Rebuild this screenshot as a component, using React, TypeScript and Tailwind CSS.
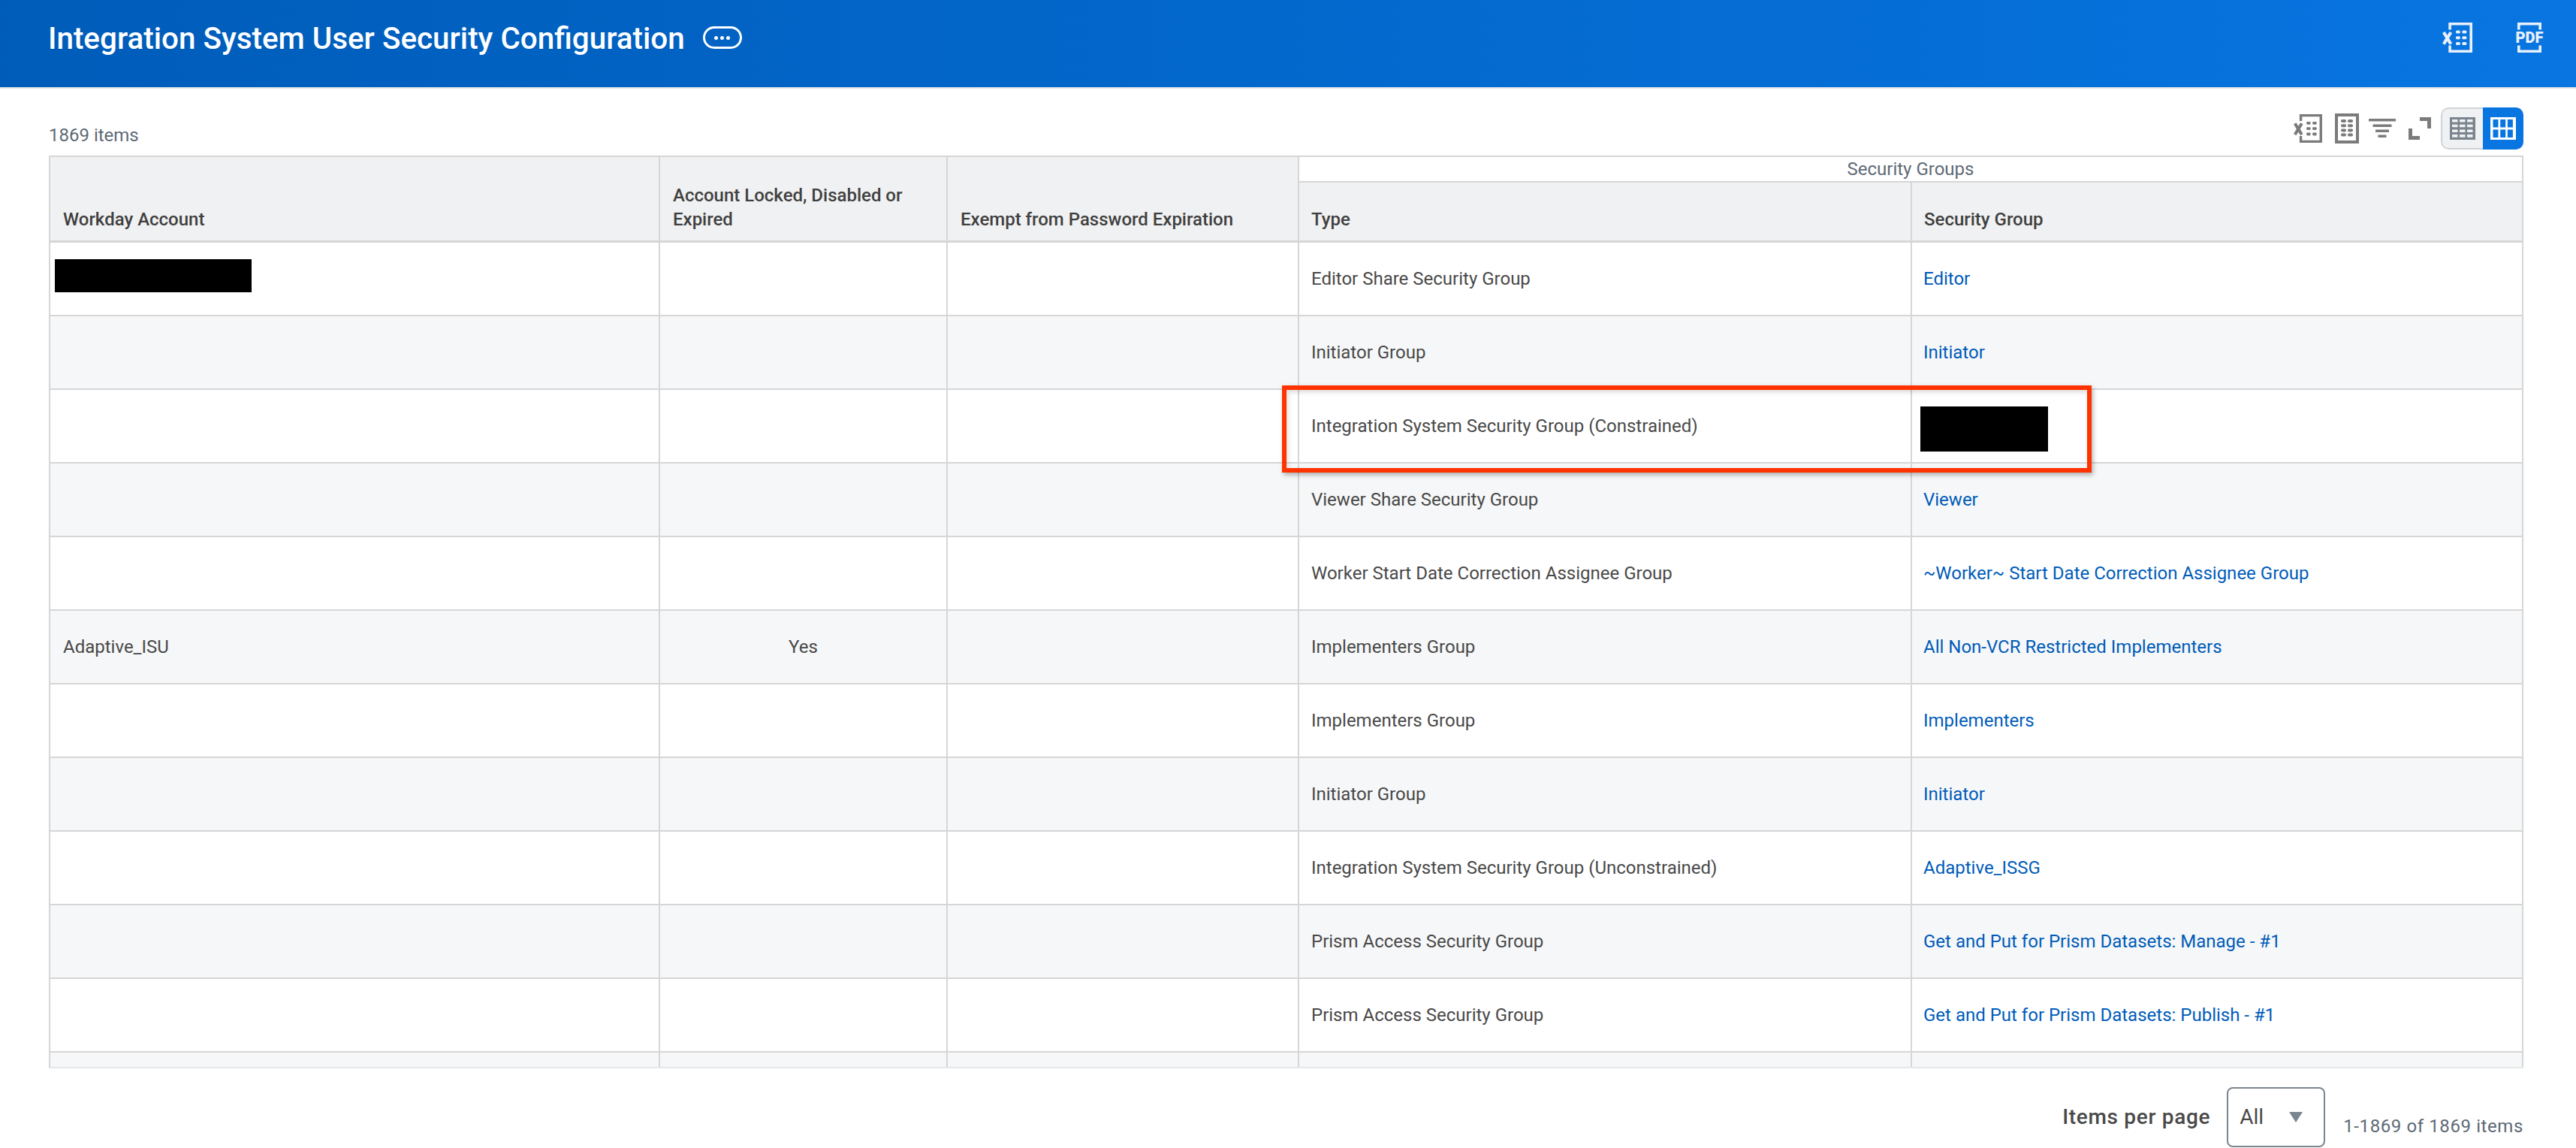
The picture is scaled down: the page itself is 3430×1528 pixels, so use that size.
const rows: [string, string, string, string][] = [
  ["", "", "Editor Share Security Group", "Editor"],
  ["", "", "Initiator Group", "Initiator"],
  ["", "", "Integration System Security Group (Constrained)", ""],
  ["", "", "Viewer Share Security Group", "Viewer"],
  ["", "", "Worker Start Date Correction Assignee Group", "~Worker~ Start Date Correction Assignee Group"],
  ["Adaptive_ISU", "Yes", "Implementers Group", "All Non-VCR Restricted Implementers"],
  ["", "", "Implementers Group", "Implementers"],
  ["", "", "Initiator Group", "Initiator"],
  ["", "", "Integration System Security Group (Unconstrained)", "Adaptive_ISSG"],
  ["", "", "Prism Access Security Group", "Get and Put for Prism Datasets: Manage - #1"],
  ["", "", "Prism Access Security Group", "Get and Put for Prism Datasets: Publish - #1"],
  ["", "", "", ""],
];

const GridLight = ({ className }: { className: string }) => (
  <svg viewBox="0 0 34 30" className={className}>
    <rect width="34" height="30" fill="currentColor" />
    {[0, 1, 2, 3].map((r) =>
      [0, 1, 2].map((c) => (
        <rect key={`${r}-${c}`} x={3 + c * 10} y={3 + r * 6.7} width="7.5" height="3.6" rx="0.5" fill="#f0f1f2" />
      ))
    )}
  </svg>
);

const GridBold = ({ className }: { className: string }) => (
  <svg viewBox="0 0 34 30" className={className}>
    <rect width="34" height="30" fill="currentColor" />
    {[0, 1].map((r) =>
      [0, 1, 2].map((c) => (
        <rect key={`${r}-${c}`} x={3.5 + c * 9.7} y={3 + r * 13.5} width="7" height="10.5" fill="#0875e1" />
      ))
    )}
  </svg>
);

const XlsIcon = ({ className }: { className: string }) => (
  <svg viewBox="0 0 40 40" fill="currentColor" className={className}>
    <path d="M8.300 0H40v40H8.300v-9.500h3.600v6H36.400V3.500H11.900v6H8.300z" />
    <path d="M1.800 13l9.600 15.600M11.400 13L1.800 28.600" stroke="currentColor" strokeWidth="4.200" fill="none" />
    {[10.500, 18.200, 25.900].map((y) => (
      <g key={y}>
        <rect x="18" y={y} width="5.800" height="4" rx="1.500" />
        <rect x="26.400" y={y} width="6" height="4" rx="1.500" />
      </g>
    ))}
  </svg>
);

export default function App() {
  return (
    <div className="relative h-[1528px] w-[3430px] overflow-hidden bg-white font-['Roboto',sans-serif]">
      <header className="flex h-[118px] items-start justify-between border-b-2 border-[#e0e3e6] bg-gradient-to-r from-[#005cb9] to-[#0875e1] pl-[64px] pr-[44px]">
        <div className="flex h-[100px] items-center gap-[24px]">
          <h1 className="pt-[4px] text-[40.4px] font-medium leading-[48px] text-white">Integration System User Security Configuration</h1>
          <span className="flex h-[30px] w-[52px] items-center justify-center gap-[3px] rounded-[15px] border-[3px] border-white">
            <i className="h-[5px] w-[5px] rounded-full bg-white" />
            <i className="h-[5px] w-[5px] rounded-full bg-white" />
            <i className="h-[5px] w-[5px] rounded-full bg-white" />
          </span>
        </div>
        <div className="flex items-start gap-[58px] pt-[30px] text-[#e8f0fb]">
          <XlsIcon className="h-[40px] w-[40px]" />
          <span className="relative block h-[40px] w-[36px]">
            <svg viewBox="0 0 32 40" fill="currentColor" className="absolute left-[2px] top-0 h-[40px] w-[32px]">
              <path d="M0 0h32v9.500h-3.600V3.500H3.600v6H0zM0 30.500h3.600v6h24.800v-6H32V40H0z" />
            </svg>
            <span className="absolute inset-0 flex items-center justify-center text-[20px] font-black leading-[40px]">PDF</span>
          </span>
        </div>
      </header>

      <div className="ml-[65px] mr-[70px] flex h-[89px] items-center justify-between pt-[34px]">
        <span className="text-[24px] leading-[32px] text-[#5e6a75]">1869 items</span>
        <div className="relative top-[-9px] flex items-center gap-[13px] text-[#7b7b7b]">
          <XlsIcon className="h-[38px] w-[38px]" />
          <svg viewBox="0 0 32 40" fill="currentColor" className="ml-[4px] h-[40px] w-[32px]">
            <path fillRule="evenodd" d="M0 0h32v40H0zM4 4v32h24V4z" />
            {[0, 1, 2, 3].map((r) => (
              <g key={r}>
                <rect x="8" y={8 + r * 6.2} width="7" height="4" rx="1.8" />
                <rect x="17" y={8 + r * 6.2} width="7" height="4" rx="1.8" />
              </g>
            ))}
          </svg>
          <svg viewBox="0 0 36 25" fill="currentColor" className="h-[25px] w-[36px]">
            <rect width="36" height="3.500" y="0" rx="0.5" />
            <rect x="5.500" width="25" height="3.500" y="7.500" rx="0.5" />
            <rect x="9" width="18" height="3.500" y="14.500" rx="0.5" />
            <rect x="12.500" width="11" height="3.500" y="21.500" rx="0.5" />
          </svg>
          <svg viewBox="0 0 30 30" fill="currentColor" className="ml-[4px] h-[30px] w-[30px]">
            <path d="M15 0h15v15h-5V5H15zM0 15h5v10h10v5H0z" />
          </svg>
          <div className="flex h-[56px] w-[110px] overflow-hidden rounded-[10px]">
            <span className="flex w-[56px] items-center justify-center rounded-l-[10px] border-2 border-r-0 border-[#ced3d9] bg-[#f0f1f2] text-[#7b858f]">
              <GridLight className="h-[30px] w-[34px]" />
            </span>
            <span className="flex w-[54px] items-center justify-center bg-[#0875e1] text-white">
              <GridBold className="h-[30px] w-[34px]" />
            </span>
          </div>
        </div>
      </div>

      <div className="ml-[65px] h-[1215px] w-[3295px] overflow-hidden border-b-2 border-l-2 border-[#d6d6d6] border-b-[#e4e8e9]">
        <table className="w-full table-fixed border-separate border-spacing-0 text-[24px] leading-[32px] text-[#494949]">
          <colgroup>
            <col className="w-[812px]" />
            <col className="w-[383px]" />
            <col className="w-[468px]" />
            <col className="w-[816px]" />
            <col className="w-[814px]" />
          </colgroup>
          <thead className="font-medium text-[#404040]">
            <tr className="h-[36px]">
              {["Workday Account", "Account Locked, Disabled or Expired", "Exempt from Password Expiration"].map((h) => (
                <th key={h} rowSpan={2} className="border-r-2 border-t-2 border-b-[3px] border-[#d6d6d6] bg-[#f0f1f2] px-[17px] pb-[12px] pt-0 text-left align-bottom font-medium">
                  {h}
                </th>
              ))}
              <th colSpan={2} className="border-r-2 border-t-2 border-b-2 border-[#d6d6d6] bg-white p-0 text-center text-[24px] font-normal leading-[30px] text-[#5e6a75]">
                Security Groups
              </th>
            </tr>
            <tr className="h-[80px]">
              <th className="border-r-2 border-b-[3px] border-[#d6d6d6] bg-[#f0f1f2] px-[16px] pb-[12px] text-left align-bottom font-medium">Type</th>
              <th className="border-r-2 border-b-[3px] border-[#d6d6d6] bg-[#f0f1f2] px-[16px] pb-[12px] text-left align-bottom font-medium">Security Group</th>
            </tr>
          </thead>
          <tbody>
            {rows.map((r, i) => (
              <tr key={i} className={`h-[98px] ${i % 2 ? "bg-[#f6f7f8]" : "bg-white"}`}>
                <td className="border-r-2 border-b-2 border-[#d6d6d6] px-[17px]">{r[0]}</td>
                <td className="border-r-2 border-b-2 border-[#d6d6d6] px-[17px] text-center">{r[1]}</td>
                <td className="border-r-2 border-b-2 border-[#d6d6d6] px-[17px]" />
                <td className="border-r-2 border-b-2 border-[#d6d6d6] px-[16px]">{r[2]}</td>
                <td className="border-r-2 border-b-2 border-[#d6d6d6] px-[15px] text-[#005cb9]">{r[3]}</td>
              </tr>
            ))}
          </tbody>
        </table>
      </div>

      <footer className="flex h-[105px] items-center justify-end pr-[70px] pt-[25px]">
        <span className="mr-[22px] text-[28px] font-medium leading-[32px] tracking-[0.7px] text-[#494949]">Items per page</span>
        <span className="mr-[24px] flex h-[80px] w-[131px] items-center justify-between rounded-[8px] border-2 border-[#7b858f] pl-[15px] pr-[28px] text-[28px] text-[#494949]">
          All
          <svg viewBox="0 0 18 14" className="h-[14px] w-[18px]" fill="#7b858f"><path d="M0 0h18L9 14z" /></svg>
        </span>
        <span className="relative top-[12px] text-[24px] tracking-[0.6px] text-[#5e6a75]">1-1869 of 1869 items</span>
      </footer>

      <div className="absolute left-[73px] top-[345px] h-[44px] w-[262px] bg-black" />
      <div className="absolute left-[2557px] top-[541px] h-[60px] w-[170px] bg-black" />
      <div className="absolute left-[1707px] top-[513px] h-[116px] w-[1078px] border-[6px] border-[#ff3300] shadow-[2px_3px_6px_rgba(0,0,0,0.3),inset_2px_3px_6px_rgba(0,0,0,0.15)]" />
    </div>
  );
}
